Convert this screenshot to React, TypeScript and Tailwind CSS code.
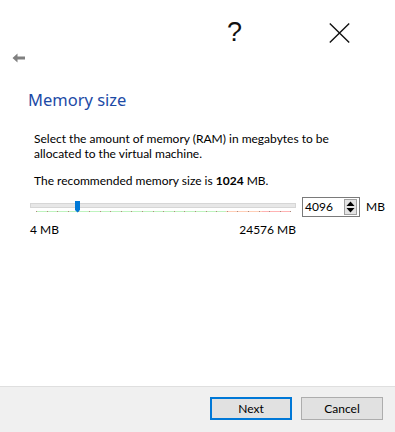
import React from "react";

const FONT = { fontFamily: 'Lato, "Noto Sans", sans-serif' };

function BackArrow() {
  return (
    <svg width="14" height="10" viewBox="0 0 14 10">
      <path d="M0.5 5 L5.5 0.6 L5.5 3.5 L13 3.5 L13 6.5 L5.5 6.5 L5.5 9.4 Z" fill="#808080" />
    </svg>
  );
}

function CloseIcon() {
  return (
    <svg width="21" height="20" viewBox="0 0 21 20">
      <path d="M0.8 0.5 L20.2 19.5 M20.2 0.5 L0.8 19.5" stroke="#111" strokeWidth="1.4" fill="none" />
    </svg>
  );
}

function Slider() {
  const ticks = Array.from({ length: 25 }, (_, i) => 6 + i * 10.6);
  return (
    <svg width="266" height="20" viewBox="0 0 266 20">
      <rect x="0.5" y="6.5" width="265" height="4" fill="#e7e7e7" stroke="#d6d6d6" />
      <rect x="6" y="14" width="190" height="1" fill="#bff3bf" />
      <rect x="196" y="14" width="36" height="1" fill="#ffcfb8" />
      <rect x="232" y="14" width="29" height="1" fill="#ffb3b3" />
      {ticks.map((t, i) => (
        <rect key={i} x={Math.round(t)} y="14" width="1" height="1" fill="#b08a7c" />
      ))}
      <path d="M45 4 H50 V13 L47.5 15.5 L45 13 Z" fill="#0078d7" />
    </svg>
  );
}

function SpinButtons() {
  return (
    <svg width="13" height="16" viewBox="0 0 13 16">
      <rect x="0.5" y="0.5" width="12" height="15" fill="#e3e3e3" stroke="#a0a0a0" />
      <path d="M2.5 7 L6.5 2.5 L10.5 7 Z" fill="#000" />
      <path d="M2.5 9 L6.5 13.5 L10.5 9 Z" fill="#000" />
    </svg>
  );
}

export default function App() {
  return (
    <div className="w-[395px] h-[432px] bg-white flex flex-col text-[#000]" style={FONT}>
      <div className="h-[64px] flex">
        <div className="flex-1 pl-[12px] pt-[53px]">
          <BackArrow />
        </div>
        <div className="flex pr-[3px]">
          <div className="w-[105px] h-[50px] flex justify-center pt-[17px]">
            <span className="text-[27px] leading-[30px] text-[#111]" style={{ fontFamily: '"Liberation Sans", sans-serif' }}>?</span>
          </div>
          <div className="w-[105px] h-[50px] flex justify-center pt-[23px]">
            <CloseIcon />
          </div>
        </div>
      </div>

      <div className="pl-[28px] mt-[24px] text-[16.5px] leading-[23px] text-[#1c4aa6]" style={{ fontFamily: '"Noto Sans", sans-serif' }}>Memory size</div>

      <div className="pl-[34px] mt-[20px] text-[12px] leading-[15px]">
        <p>Select the amount of memory (RAM) in megabytes to be</p>
        <p>allocated to the virtual machine.</p>
        <p className="mt-[12px]">
          The recommended memory size is <b>1024</b> MB.
        </p>
      </div>

      <div className="mt-[9px] pl-[30px] flex items-center h-[20px]">
        <Slider />
        <div className="ml-[6px] w-[58px] h-[20px] border border-[#7a7a7a] flex items-center justify-between pl-[2px] pr-[2px]">
          <span className="text-[12px] leading-[14px]">4096</span>
          <SpinButtons />
        </div>
        <span className="ml-[6px] text-[12px]">MB</span>
      </div>

      <div className="mt-[5px] pl-[30px] w-[296px] flex justify-between text-[12px] leading-[15px]">
        <span>4 MB</span>
        <span>24576 MB</span>
      </div>

      <div className="mt-auto h-[46px] bg-[#f0f0f0] border-t border-[#dfdfdf] flex justify-end items-start pt-[10px] pr-[12px] gap-[9px]">
        <button className="w-[82px] h-[23px] bg-[#e1e1e1] border-2 border-[#0078d7] text-[12px] leading-[18px]">Next</button>
        <button className="w-[82px] h-[23px] bg-[#e1e1e1] border border-[#adadad] text-[12px] leading-[20px]">Cancel</button>
      </div>
    </div>
  );
}
